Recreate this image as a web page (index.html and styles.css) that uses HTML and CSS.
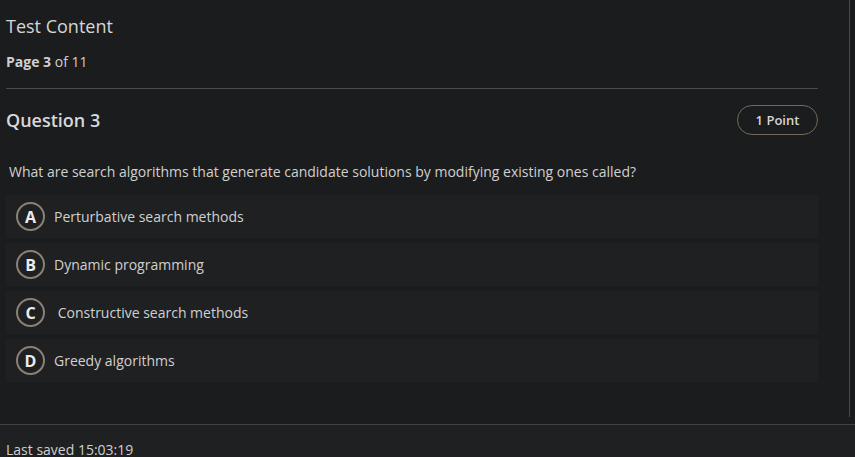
FILE: index.html
```html
<!DOCTYPE html>
<html lang="en">
<head>
<meta charset="utf-8">
<title>Test Content</title>
<link rel="stylesheet" href="styles.css">
</head>
<body>
<div class="main">
  <div class="content">
    <h1 class="title">Test Content</h1>
    <div class="page"><strong>Page 3</strong> of 11</div>
    <hr class="rule">
    <div class="qhead">
      <h2 class="qtitle">Question 3</h2>
      <span class="points">1 Point</span>
    </div>
    <p class="qtext">What are search algorithms that generate candidate solutions by modifying existing ones called?</p>
    <ul class="options">
      <li class="option"><span class="letter">A</span><span class="label">Perturbative search methods</span></li>
      <li class="option"><span class="letter">B</span><span class="label">Dynamic programming</span></li>
      <li class="option"><span class="letter">C</span><span class="label">&nbsp;Constructive search methods</span></li>
      <li class="option"><span class="letter">D</span><span class="label">Greedy algorithms</span></li>
    </ul>
  </div>
</div>
<footer class="footer">Last saved 15:03:19</footer>
</body>
</html>
```

FILE: styles.css
```css
html, body {
  margin: 0;
  padding: 0;
  background: #1b1c1e;
  height: 457px;
  overflow: hidden;
}
body {
  font-family: "Open Sans", "Liberation Sans", sans-serif;
  color: #d2d2d2;
}
.main {
  width: 849px;
  height: 417px;
  border-right: 1px solid #48484a;
  box-sizing: content-box;
}
.content {
  width: 812px;
  padding: 0 0 0 6px;
}
.title {
  margin: 0;
  padding-top: 14px;
  font-size: 18px;
  font-weight: 400;
  line-height: 24px;
  color: #d6d6d6;
}
.page {
  margin-top: 14px;
  font-size: 14px;
  line-height: 20px;
  color: #cfcfcf;
}
.page strong {
  font-weight: 700;
}
.rule {
  margin: 16px 0 0;
  border: 0;
  border-top: 1px solid #4a4a4c;
  height: 0;
}
.qhead {
  display: flex;
  justify-content: space-between;
  align-items: center;
  margin-top: 16px;
}
.qtitle {
  margin: 0;
  font-size: 18px;
  font-weight: 600;
  line-height: 30px;
  color: #d8d8d8;
}
.points {
  display: inline-flex;
  align-items: center;
  justify-content: center;
  width: 81px;
  height: 30px;
  box-sizing: border-box;
  border: 1px solid #74695c;
  border-radius: 15px;
  font-size: 13px;
  font-weight: 600;
  color: #d4d4d4;
}
.qtext {
  margin: 27px 0 0 3px;
  font-size: 14px;
  line-height: 20px;
  color: #d0d0d0;
}
.options {
  list-style: none;
  margin: 13px 0 0;
  padding: 0;
  display: flex;
  flex-direction: column;
  gap: 5px;
}
.option {
  display: flex;
  align-items: center;
  height: 43px;
  background: #1f2022;
  padding-left: 11px;
}
.letter {
  display: inline-flex;
  align-items: center;
  justify-content: center;
  width: 25px;
  height: 25px;
  border: 2px solid #8a8075;
  border-radius: 50%;
  font-size: 16px;
  font-weight: 700;
  color: #ececec;
  box-sizing: content-box;
  margin-right: 9px;
  margin-left: -1px;
}
.label {
  font-size: 14px;
  color: #d0d0d0;
}
.footer {
  margin-top: 7px;
  border-top: 1px solid #424244;
  background: #1f2022;
  height: 40px;
  padding: 15px 0 0 6px;
  font-size: 14px;
  line-height: 20px;
  color: #cfcfcf;
}
```
